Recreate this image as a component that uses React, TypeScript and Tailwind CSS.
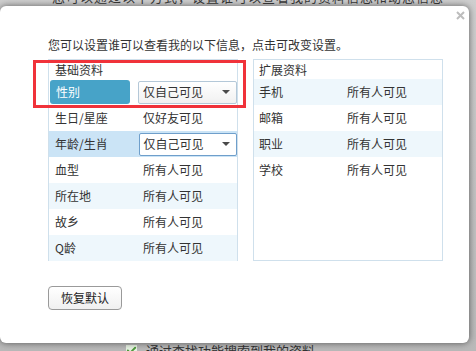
import { Check } from 'lucide-react'

const basic = [
  { label: '性别', value: '仅自己可见', kind: 'active' },
  { label: '生日/星座', value: '仅好友可见', kind: 'plain' },
  { label: '年龄/生肖', value: '仅自己可见', kind: 'hover' },
  { label: '血型', value: '所有人可见', kind: 'plain' },
  { label: '所在地', value: '所有人可见', kind: 'plain' },
  { label: '故乡', value: '所有人可见', kind: 'plain' },
  { label: 'Q龄', value: '所有人可见', kind: 'plain' },
]

const extended = [
  { label: '手机', value: '所有人可见' },
  { label: '邮箱', value: '所有人可见' },
  { label: '职业', value: '所有人可见' },
  { label: '学校', value: '所有人可见' },
]

function Select({ value, focused }: { value: string; focused?: boolean }) {
  return (
    <div
      className={`w-[99px] h-[23px] flex items-center justify-between pl-[4px] pr-[6px] rounded-[2px] border ${
        focused ? 'border-[#6f9fcb] bg-white' : 'border-[#b4c8d8] bg-gradient-to-b from-white to-[#f1f1f1]'
      }`}
    >
      <span>{value}</span>
      <span className="w-0 h-0 border-l-[4px] border-r-[4px] border-t-[4px] border-l-transparent border-r-transparent border-t-[#4a4a4a]" />
    </div>
  )
}

export default function App() {
  return (
    <div
      className="relative w-[476px] h-[351px] overflow-hidden bg-gradient-to-b from-[#cfcfcf] to-[#b9b9b9] text-[12px] text-[#333]"
      style={{ fontFamily: '"Noto Sans CJK SC", "Noto Sans", sans-serif' }}
    >
      {/* page behind the dialog */}
      <div className="absolute left-[52px] top-[-13px] text-[13px] text-[#3a3a3a] tracking-[1px]">
        您可以通过以下方式，设置谁可以查看我的资料信息和动态信息
      </div>
      <div className="absolute left-[126px] top-[341px] flex items-center gap-[9px] text-[13px] text-[#333]">
        <span className="w-[11px] h-[11px] bg-[#e8f3e4] flex items-center justify-center">
          <Check className="w-[11px] h-[11px] text-[#4f9a3c]" strokeWidth={4} />
        </span>
        <span>通过查找功能搜索到我的资料</span>
      </div>

      <div className="relative mt-[6px] w-[469px] h-[337px] bg-white rounded-[6px] shadow-[0_0_7px_rgba(0,0,0,0.55)] pl-[48px] pt-[31px]">
        {/* close */}
        <svg className="absolute left-[456px] top-[5px]" width="9" height="9" viewBox="0 0 9 9">
          <path d="M1 1L8 8M8 1L1 8" stroke="#bdbdbd" strokeWidth="2" />
        </svg>

        <p className="h-[16px] leading-[16px]">您可以设置谁可以查看我的以下信息，点击可改变设置。</p>

        <div className="mt-[6px] flex gap-[15px]">
          <div className="w-[190px] h-[202px] border border-[#cfe0ec]">
            <div className="h-[19px] leading-[19px] pl-[6px]">基础资料</div>
            {basic.map((row, i) => {
              const bg = row.kind === 'hover' ? 'bg-[#cbe4f6]' : i % 2 === 0 && i > 0 ? 'bg-[#eef7fc]' : 'bg-white'
              if (row.kind === 'active') {
                return (
                  <div key={row.label} className={`h-[26px] flex items-center pl-[1px] ${bg}`}>
                    <div className="w-[81px] h-[24px] rounded-[3px] bg-[#47a3c8] text-white flex items-center pl-[6px]">
                      {row.label}
                    </div>
                    <div className="ml-[8px]">
                      <Select value={row.value} />
                    </div>
                  </div>
                )
              }
              return (
                <div key={row.label} className={`h-[26px] flex items-center pl-[6px] ${bg}`}>
                  <span className="w-[84px]">{row.label}</span>
                  {row.kind === 'hover' ? <Select value={row.value} focused /> : <span className="pl-[4px]">{row.value}</span>}
                </div>
              )
            })}
          </div>

          <div className="w-[190px] h-[202px] border border-[#cfe0ec]">
            <div className="h-[19px] leading-[19px] pl-[5px]">扩展资料</div>
            {extended.map((row, i) => (
              <div key={row.label} className={`h-[26px] flex items-center pl-[5px] ${i % 2 === 0 ? 'bg-[#eef7fc]' : 'bg-white'}`}>
                <span className="w-[88px]">{row.label}</span>
                <span>{row.value}</span>
              </div>
            ))}
          </div>
        </div>

        <button className="mt-[25px] w-[74px] h-[24px] rounded-[4px] border border-[#9a9a9a] bg-gradient-to-b from-white to-[#f0f0f0] text-[12px] text-[#222]">
          恢复默认
        </button>

        {/* highlight box */}
        <div className="absolute left-[33px] top-[54px] w-[213px] h-[48px] border-[3px] border-[#f0323a]" />
      </div>
    </div>
  )
}
